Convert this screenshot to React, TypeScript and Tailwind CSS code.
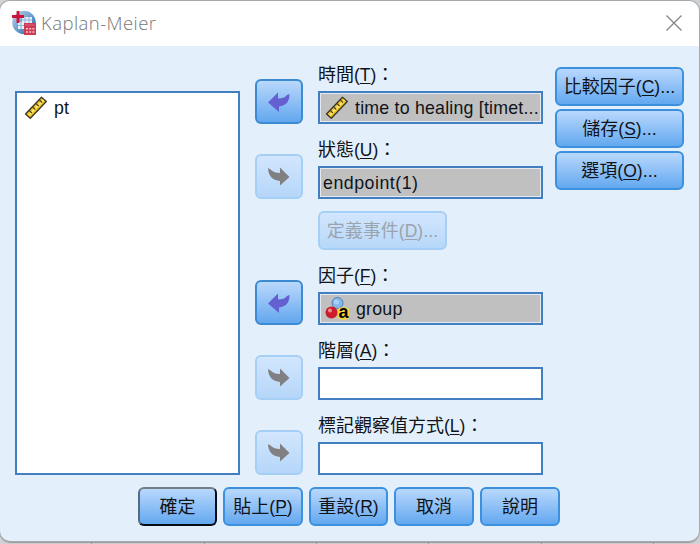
import type { ReactNode } from 'react';
import clsx from 'clsx';

function AppIcon() {
  return (
    <svg width="26" height="26" viewBox="0 0 26 26">
      <defs>
        <linearGradient id="globe" x1="0" y1="0" x2="1" y2="1">
          <stop offset="0" stopColor="#c2d6e8" />
          <stop offset="0.5" stopColor="#6f9fcd" />
          <stop offset="1" stopColor="#1f5c9c" />
        </linearGradient>
      </defs>
      <circle cx="13" cy="12.500" r="11.800" fill="url(#globe)" />
      <path d="M11 7h10v6h-8v6H7V12h4z" fill="#e6eff8" />
      <path d="M7 15.500h6M10 12v7M14 7v6M18 7v6M11 10h10" stroke="#8db3d9" strokeWidth="1" />
      <path d="M7 1v12M1 6.500h12" stroke="#cf1238" strokeWidth="2.800" />
      <path d="M13 13h12v12H13z" fill="#cd3a56" />
      <path d="M15 18h2v1.500h-2zM18.200 18h2v1.500h-2zM21.400 18h2v1.500h-2zM15 21.300h2v1.500h-2zM18.200 21.300h2v1.500h-2zM21.400 21.300h2v1.500h-2z" fill="#f4c3cc" />
      <path d="M14 15h10" stroke="#dc6378" />
    </svg>
  );
}

function RulerIcon() {
  return (
    <svg width="24" height="24" viewBox="0 0 24 24" className="shrink-0">
      <path d="M1.500 18L17.500 1.200L22.300 5.500L6.300 22.300Z" fill="#efc425" stroke="#3f3a28" strokeWidth="1.400" strokeLinejoin="round" />
      <path d="M5 19.200L19.500 4" stroke="#ffe873" strokeWidth="1.800" />
      <path d="M5.200 14.500l2.700 2.500M8.600 11l2.700 2.500M12 7.500l2.700 2.500M15.400 4l2.700 2.500" stroke="#4f4725" strokeWidth="1.200" />
    </svg>
  );
}

function NominalIcon() {
  return (
    <svg width="25" height="25" viewBox="0 0 25 25" className="shrink-0">
      <circle cx="12.500" cy="7" r="5.500" fill="#84b6e8" stroke="#4f84bb" />
      <circle cx="11.500" cy="6" r="2.500" fill="#a9d0f5" />
      <circle cx="6.500" cy="16.500" r="6" fill="#cb1b2d" />
      <circle cx="5" cy="14.500" r="2" fill="#ea8d92" />
      <rect x="13" y="11.500" width="11" height="12" rx="3" fill="#fbd538" />
      <text x="13.500" y="22" fontFamily="Liberation Sans, sans-serif" fontWeight="bold" fontSize="18" letterSpacing="0" fill="#000">a</text>
    </svg>
  );
}

function MoveButton({ direction, disabled }: { direction: 'left' | 'right'; disabled?: boolean }) {
  return (
    <button
      className={clsx(
        'flex h-[45px] w-12 items-center justify-center rounded-[6px] border-2 bg-gradient-to-b',
        disabled ? 'border-[#a6cff5] from-[#d2e6fd] to-[#b5d6f9]' : 'border-[#3c8ad2] from-[#b9d8fc] to-[#62a7ee]'
      )}
    >
      {direction === 'left' ? (
        <svg width="22" height="20" viewBox="0 0 22 20">
          <path d="M0 10.500L10 0.500V6.500Q16.500 6.500 19 3L21.500 2Q21.500 13.500 11 14.500V20Z" fill="#6560d2" />
        </svg>
      ) : (
        <svg width="22" height="20" viewBox="0 0 22 20">
          <path d="M21.500 10L12 0.500V6Q6 6 2.500 2.500L0 1Q0.500 13 12 14V18.500Z" fill="#808083" />
        </svg>
      )}
    </button>
  );
}

function Caption({ text, hotkey, suffix }: { text: string; hotkey?: string; suffix?: string }) {
  return (
    <span className="whitespace-nowrap">
      {text}
      {hotkey && <span className="text-[17.5px]">(<span className="underline decoration-1 underline-offset-2">{hotkey}</span>)</span>}
      {suffix}
    </span>
  );
}

interface DialogButtonProps {
  text: string;
  hotkey?: string;
  suffix?: string;
  variant?: 'normal' | 'primary' | 'disabled';
  className?: string;
}

function DialogButton({ text, hotkey, suffix, variant = 'normal', className }: DialogButtonProps) {
  return (
    <button
      className={clsx(
        'flex h-[39px] items-center justify-center rounded-[6px] border-2 bg-gradient-to-b',
        variant === 'normal' && 'border-[#3c91df] from-[#b9d8fd] to-[#62a8ef]',
        variant === 'primary' && 'border-t-[#777d88] border-r-[#080c12] border-b-[#080c12] border-l-[#546b84] from-[#b9d8fd] to-[#62a8ef]',
        variant === 'disabled' && 'border-[#a6cff5] from-[#d2e6fd] to-[#b7d8fa] text-[#9ba4ad]',
        className
      )}
    >
      <Caption text={text} hotkey={hotkey} suffix={suffix} />
    </button>
  );
}

interface FieldRowProps {
  label: string;
  hotkey: string;
  direction: 'left' | 'right';
  children?: ReactNode;
}

function FieldRow({ label, hotkey, direction, children }: FieldRowProps) {
  return (
    <div className="flex h-[75px] items-end gap-[15px]">
      <MoveButton direction={direction} disabled={direction === 'right'} />
      <div className="w-[225px]">
        <div className="mb-1 flex h-6 items-center">
          <Caption text={label} hotkey={hotkey} suffix="：" />
        </div>
        <div
          className={clsx(
            'flex h-[33px] items-center border-2 border-[#427fc1] text-[17.8px] tracking-[0.2px] whitespace-nowrap',
            children ? 'bg-[#c0c0c0] shadow-[inset_0_0_0_1px_#e4eaf0]' : 'bg-white'
          )}
        >
          {children}
        </div>
      </div>
    </div>
  );
}

const gridLines = ['w-[92px]', 'w-[113px]', 'w-[112px]', 'w-[112px]', 'w-[113px]', 'w-[112px]'];

export default function App() {
  return (
    <div className="relative h-[544px] w-[700px] overflow-hidden bg-[#d1d2d3] pt-px font-['Liberation_Sans','Noto_Sans_CJK_TC',sans-serif] text-[18px] leading-6 text-[#10141a]">
      {/* Spreadsheet edge behind the dialog */}
      <div className="absolute inset-0 flex">
        {gridLines.map((width, i) => (
          <div key={i} className={clsx('h-full shrink-0 border-r border-[#9a9b9c]', width)} />
        ))}
      </div>

      <div className="relative h-[540px] w-[699px] overflow-hidden rounded-[10px] bg-[#e3effb] shadow-[0_0_0_1px_#a7a9ab,0_2px_1px_#999]">
        <header className="flex h-[45px] items-center bg-white pr-[17px] pb-px pl-[11px]">
          <AppIcon />
          <h1 className="ml-1 font-['Open_Sans',sans-serif] text-[18.5px] font-light tracking-[0.45px] text-[#777]">Kaplan-Meier</h1>
          <svg width="16" height="16" viewBox="0 0 16 16" className="ml-auto">
            <path d="M0.500 0.500l15 15M15.500 0.500l-15 15" stroke="#858585" strokeWidth="1.300" />
          </svg>
        </header>

        <main className="flex pt-[3px] pl-[15px]">
          <div className="mt-[42px] h-[384px] w-[225px] border-2 border-[#427fc1] bg-white pt-[3px] pl-[7px]">
            <div className="flex items-center gap-1.5 text-[17.8px] tracking-[0.2px]">
              <RulerIcon />
              pt
            </div>
          </div>

          <div className="ml-[15px]">
            <FieldRow label="時間" hotkey="T" direction="left">
              <span className="ml-[5px] flex items-center gap-1.5"><RulerIcon />time to healing [timet...</span>
            </FieldRow>
            <FieldRow label="狀態" hotkey="U" direction="right">
              <span className="ml-[3px] tracking-[0.5px]">endpoint(1)</span>
            </FieldRow>
            <div className="h-[51px] pt-3 pl-[63px]">
              <DialogButton text="定義事件" hotkey="D" suffix="..." variant="disabled" className="w-[129px]" />
            </div>
            <FieldRow label="因子" hotkey="F" direction="left">
              <span className="ml-[5px] flex items-center gap-1.5"><NominalIcon />group</span>
            </FieldRow>
            <FieldRow label="階層" hotkey="A" direction="right" />
            <FieldRow label="標記觀察值方式" hotkey="L" direction="right" />
          </div>

          <div className="mt-[18px] ml-3 flex flex-col gap-[3px]">
            <DialogButton text="比較因子" hotkey="C" suffix="..." className="w-[129px]" />
            <DialogButton text="儲存" hotkey="S" suffix="..." className="w-[129px]" />
            <DialogButton text="選項" hotkey="O" suffix="..." className="w-[129px]" />
          </div>
        </main>

        <footer className="mt-3 flex gap-1.5 pl-[138px]">
          <DialogButton text="確定" variant="primary" className="w-[79px]" />
          <DialogButton text="貼上" hotkey="P" className="w-20" />
          <DialogButton text="重設" hotkey="R" className="w-[79px]" />
          <DialogButton text="取消" className="w-20" />
          <DialogButton text="說明" className="w-20" />
        </footer>
      </div>
    </div>
  );
}
